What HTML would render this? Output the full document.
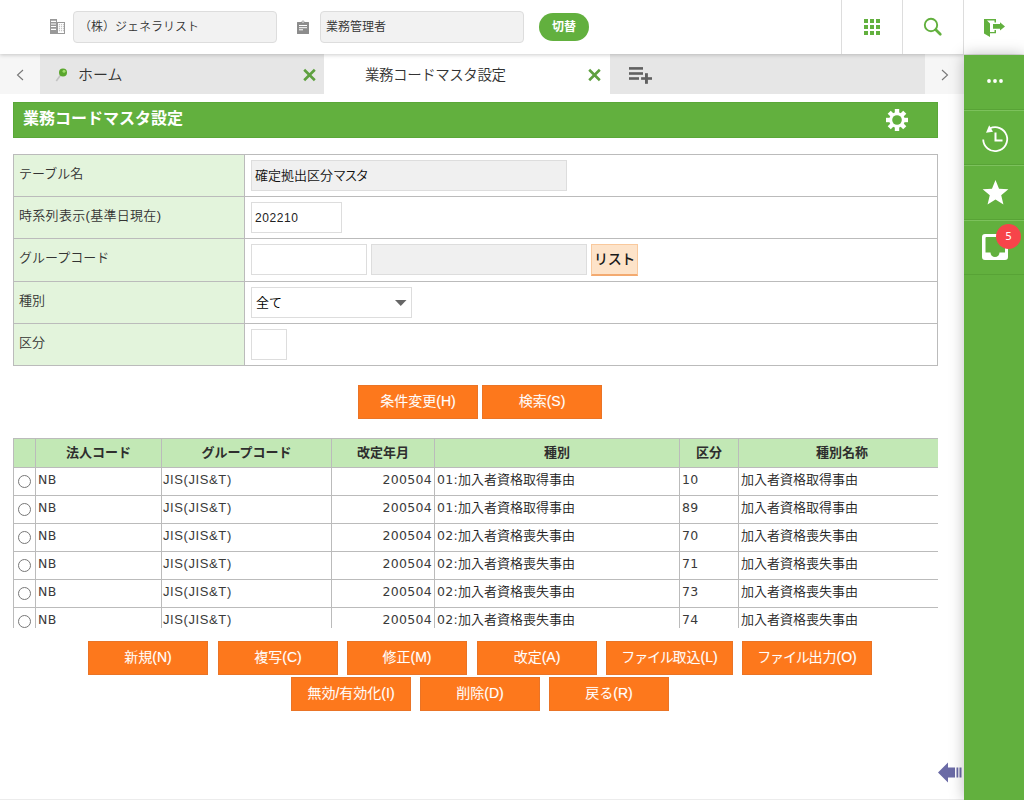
<!DOCTYPE html>
<html lang="ja">
<head>
<meta charset="utf-8">
<title>業務コードマスタ設定</title>
<style>
*{box-sizing:border-box;margin:0;padding:0}
html,body{width:1024px;height:800px;overflow:hidden;background:#fff}
body{font-family:"Liberation Sans","Noto Sans CJK JP",sans-serif;font-size:13px;font-weight:350;color:#333;position:relative}
.abs{position:absolute}
/* header */
#hdr{position:absolute;left:0;top:0;width:1024px;height:54px;background:#fff;z-index:3;box-shadow:0 1px 4px rgba(0,0,0,.2)}
.hin{position:absolute;top:11px;height:32px;background:#f2f2f2;border:1px solid #ddd;border-radius:4px;font-size:12px;line-height:31px;padding-left:5px;color:#333;white-space:nowrap;overflow:hidden}
.hdiv{position:absolute;top:0;width:1px;height:54px;background:#ddd}
#sw{position:absolute;left:539px;top:13px;width:50px;height:28px;border-radius:14px;background:#62b03e;color:#fff;font-weight:bold;font-size:12px;line-height:29px;text-align:center}
/* tabs */
#tabs{position:absolute;left:0;top:54px;width:964px;height:40px;background:#f6f6f6}
.tab{position:absolute;top:0;height:40px;font-size:14px;line-height:41px;color:#333;white-space:nowrap}
/* sidebar */
#side{position:absolute;left:964px;top:55px;width:60px;height:745px;background:#62b03e;z-index:4;box-shadow:0 0 14px rgba(0,0,0,.26)}
.sdiv{position:absolute;left:0;width:60px;height:2px;border-top:1px solid #58a336;border-bottom:1px solid #7cc15c}
/* main */
#ttl{position:absolute;left:13px;top:102px;width:925px;height:36px;background:#62b03e;border:1px solid #5aa738;color:#fff;font-weight:bold;font-size:16px;line-height:31px;padding-left:9px}
#form{position:absolute;left:13px;top:154px;width:925px;height:212px;border:1px solid #bbb;background:#fff}
.fr{position:absolute;left:0;width:923px;height:42px;border-bottom:1px solid #bbb}
.fl{position:absolute;left:0;top:0;width:231px;height:100%;background:#e3f4dc;border-right:1px solid #bbb;font-size:13px;line-height:37px;padding-left:5px;color:#333}
.in{position:absolute;height:31px;border:1px solid #ddd;background:#fff;font-size:13px;line-height:29px;padding-left:3px;color:#111;white-space:nowrap}
.ro{background:#f0f0f0}
.ob{position:absolute;height:34px;background:#fd781c;border:1px solid #ea7426;color:#fff;font-size:14px;line-height:31px;text-align:center;white-space:nowrap;text-shadow:0 0 1px rgba(255,255,255,.4)}
/* grid */
#grid{position:absolute;left:13px;top:438px;width:925px;height:190px;overflow:hidden}
#grid table{border-collapse:collapse;table-layout:fixed;width:1000px}
#grid th{height:29px;background:#c2e8b5;border:1px solid #bbb;font-size:13px;font-weight:700;color:#2e2e2e;text-align:center;vertical-align:top;line-height:27px;padding:0}
#grid td{height:28px;border:1px solid #bbb;font-size:13px;color:#222;padding:0 2px;vertical-align:top;line-height:24px;white-space:nowrap}
#grid td.r{text-align:right}
.l{font-family:"DejaVu Sans","Liberation Sans",sans-serif;font-size:12.5px;font-weight:400;color:#3a3a3a;letter-spacing:.3px}
.j{font-family:"Liberation Sans",sans-serif;font-size:13px;letter-spacing:.6px;margin-left:-1px}
.rd{display:block;width:13px;height:13px;border:1px solid #777;border-radius:50%;margin:7px 0 0 2px;background:#fff}
</style>
</head>
<body>

<div id="hdr">
  <svg class="abs" style="left:50px;top:19px" width="16" height="15" viewBox="0 0 16 15"><rect x="0" y="0" width="7" height="15" fill="#999"/><path d="M1 2.300h5M1 5h5M1 7.500h5M1 10.300h5" stroke="#fff" stroke-width="1.200"/><rect x="7.500" y="3.500" width="7" height="11" fill="#fff" stroke="#999" stroke-width="1"/><g fill="#999"><rect x="8.900" y="5.300" width=".9" height=".9"/><rect x="10.900" y="5.300" width=".9" height=".9"/><rect x="12.900" y="5.300" width=".9" height=".9"/><rect x="8.900" y="7.300" width=".9" height=".9"/><rect x="10.900" y="7.300" width=".9" height=".9"/><rect x="12.900" y="7.300" width=".9" height=".9"/><rect x="8.900" y="9.300" width=".9" height=".9"/><rect x="10.900" y="9.300" width=".9" height=".9"/><rect x="12.900" y="9.300" width=".9" height=".9"/><rect x="8.900" y="11.300" width=".9" height=".9"/><rect x="10.900" y="11.300" width=".9" height=".9"/><rect x="12.900" y="11.300" width=".9" height=".9"/></g></svg>
  <div class="hin" style="left:73px;width:204px">（株）ジェネラリスト</div>
  <svg class="abs" style="left:297px;top:20px" width="12" height="14" viewBox="0 0 12 14"><path d="M0.500 2h4a1.500 1.500 0 0 1 3 0h4a.5.5 0 0 1 .5.500v11a.5.5 0 0 1-.5.500h-11a.5.5 0 0 1-.5-.500v-11a.5.5 0 0 1 .5-.500z" fill="#8c8c8c"/><circle cx="6" cy="2" r=".8" fill="#fff"/><path d="M2 5.500h8M2 7.700h8M2 9.800h4" stroke="#fff" stroke-width="1"/></svg>
  <div class="hin" style="left:320px;width:204px;padding-left:5px">業務管理者</div>
  <div id="sw">切替</div>
  <div class="hdiv" style="left:841px"></div>
  <div class="hdiv" style="left:902px"></div>
  <div class="hdiv" style="left:963px"></div>
  <svg class="abs" style="left:864px;top:19px" width="16" height="16" viewBox="0 0 16 16" fill="#62b03e"><rect x="0" y="0" width="4" height="4"/><rect x="6" y="0" width="4" height="4"/><rect x="12" y="0" width="4" height="4"/><rect x="0" y="6" width="4" height="4"/><rect x="6" y="6" width="4" height="4"/><rect x="12" y="6" width="4" height="4"/><rect x="0" y="12" width="4" height="4"/><rect x="6" y="12" width="4" height="4"/><rect x="12" y="12" width="4" height="4"/></svg>
  <svg class="abs" style="left:923px;top:17px" width="20" height="20" viewBox="0 0 20 20"><circle cx="8" cy="8" r="6.200" fill="none" stroke="#62b03e" stroke-width="1.900"/><path d="M12.800 12.800L17.300 17.300" stroke="#62b03e" stroke-width="2.700" stroke-linecap="round"/></svg>
  <svg class="abs" style="left:983px;top:17px" width="24" height="21" viewBox="0 0 24 21" fill="#62b03e"><path d="M1 2H13V5.500H11.500V3.500H4L7 6.500V15H11.500V13H13V16.300H7V20L1 16.500z"/><path d="M10 7H17V5.200L22 9.400L17 13.600V11.800H10z"/></svg>
</div>

<div id="tabs">
  <div class="tab" style="left:40px;width:284px;background:#e6e6e6"></div>
  <div class="tab" style="left:324px;width:286px;background:#fff"></div>
  <div class="tab" style="left:610px;width:315px;background:#e6e6e6"></div>
  <svg class="abs" style="left:16px;top:15px" width="8" height="12" viewBox="0 0 8 12"><path d="M7 1L1.500 6L7 11" fill="none" stroke="#777" stroke-width="1.100"/></svg>
  <svg class="abs" style="left:941px;top:15px" width="8" height="12" viewBox="0 0 8 12"><path d="M1 1L6.500 6L1 11" fill="none" stroke="#777" stroke-width="1.100"/></svg>
  <svg class="abs" style="left:55px;top:13px" width="14" height="15" viewBox="0 0 14 15"><path d="M1.300 14L6 7.500" stroke="#c2c2c2" stroke-width="1.600"/><circle cx="8" cy="5.500" r="4" fill="#5aa62d"/><circle cx="9" cy="4.300" r="1.500" fill="#9fdc6a"/></svg>
  <div class="tab" style="left:78px;font-size:15px;line-height:42px">ホーム</div>
  <svg class="abs" style="left:303px;top:14px" width="13" height="14" viewBox="0 0 13 14"><path d="M1.200 1.800L11.800 12.200M11.800 1.800L1.200 12.200" stroke="#5ea03f" stroke-width="2.600"/></svg>
  <div class="tab" style="left:365px;font-size:14.500px;letter-spacing:-.45px;line-height:42px">業務コードマスタ設定</div>
  <svg class="abs" style="left:588px;top:14px" width="13" height="14" viewBox="0 0 13 14"><path d="M1.200 1.800L11.800 12.200M11.800 1.800L1.200 12.200" stroke="#5ea03f" stroke-width="2.600"/></svg>
  <svg class="abs" style="left:629px;top:13px" width="24" height="18" viewBox="0 0 24 18" fill="#606060"><rect x="0" y=".1" width="14" height="2.600"/><rect x="0" y="5.200" width="14" height="2.600"/><rect x="0" y="10.200" width="10" height="2.600"/><rect x="12.100" y="10.200" width="10.900" height="2.600"/><rect x="16" y="6.200" width="2.900" height="10.600"/></svg>
</div>

<div id="side">
  <div class="sdiv" style="top:54px"></div>
  <div class="sdiv" style="top:109px"></div>
  <div class="sdiv" style="top:164px"></div>
  <div class="sdiv" style="top:219px;border-bottom-color:transparent"></div>
  <svg class="abs" style="left:23px;top:23px" width="16" height="6" viewBox="0 0 16 6" fill="#fff"><circle cx="2" cy="3" r="1.900"/><circle cx="8" cy="3" r="1.900"/><circle cx="14" cy="3" r="1.900"/></svg>
  <svg class="abs" style="left:15px;top:68px" width="32" height="32" viewBox="0 0 32 32"><path d="M4.200 16.500a12 12 0 1 0 6.500-11" fill="none" stroke="#fff" stroke-width="1.800"/><path d="M7 9.800L10.200 2.300L14 8.800z" fill="#fff"/><path d="M16.500 9.500v8h7" fill="none" stroke="#fff" stroke-width="2"/></svg>
  <svg class="abs" style="left:18px;top:124px" width="28" height="28" viewBox="0 0 28 28"><path d="M13.50 1.00L17.03 9.65L26.34 10.33L19.21 16.35L21.44 25.42L13.50 20.50L5.56 25.42L7.79 16.35L0.66 10.33L9.97 9.65z" fill="#fff"/></svg>
  <svg class="abs" style="left:18px;top:179px" width="26" height="26" viewBox="0 0 26 26"><path d="M3 0h20a3 3 0 0 1 3 3v20a3 3 0 0 1-3 3H3a3 3 0 0 1-3-3V3a3 3 0 0 1 3-3zM3.500 4v14.500H8.500a4.500 4.500 0 0 0 9 0H23V4a1 1 0 0 0-1-1H4.500a1 1 0 0 0-1 1z" fill="#fff" fill-rule="evenodd"/></svg>
  <div class="abs" style="left:32px;top:169px;width:25px;height:25px;border-radius:50%;background:#f7444a;color:#fff;font-family:'DejaVu Sans',sans-serif;font-weight:400;font-size:10.500px;line-height:25px;text-align:center">5</div>
</div>

<div id="ttl">業務コードマスタ設定
  <svg class="abs" style="left:872px;top:6px" width="22" height="22" viewBox="0 0 22 22"><g fill="#fff"><circle cx="11" cy="11" r="7.800"/><rect x="8.800" y="0" width="4.400" height="22"/><rect x="8.800" y="0" width="4.400" height="22" transform="rotate(45 11 11)"/><rect x="8.800" y="0" width="4.400" height="22" transform="rotate(90 11 11)"/><rect x="8.800" y="0" width="4.400" height="22" transform="rotate(135 11 11)"/></g><circle cx="11" cy="11" r="4.800" fill="#62b03e"/></svg>
</div>

<div id="form">
  <div class="fr" style="top:0"><div class="fl">テーブル名</div><div class="in ro" style="left:237px;top:5px;width:316px">確定拠出区分<span style="letter-spacing:-1.600px">マスタ</span></div></div>
  <div class="fr" style="top:42px"><div class="fl" style="letter-spacing:.3px">時系列表示(基準日現在)</div><div class="in" style="left:237px;top:5px;width:91px;font-size:12px;padding-left:3px;line-height:31px;color:#222;letter-spacing:.6px">202210</div></div>
  <div class="fr" style="top:84px;height:43px"><div class="fl">グループコード</div><div class="in" style="left:237px;top:5px;width:116px"></div><div class="in ro" style="left:357px;top:5px;width:216px"></div>
    <div class="abs" style="left:577px;top:5px;width:47px;height:32px;background:#fde3c9;border:1px solid #f9c99d;border-bottom:2px solid #f3aa70;font-weight:500;font-size:14px;line-height:28px;text-align:center;color:#1a1a1a;letter-spacing:-.3px">リスト</div></div>
  <div class="fr" style="top:127px"><div class="fl">種別</div><div class="in" style="left:237px;top:5px;width:161px;font-size:13px;padding-left:4px;color:#000">全て<svg class="abs" style="left:143px;top:12px" width="12" height="6" viewBox="0 0 12 6"><path d="M0 0h11.500L5.750 6z" fill="#666"/></svg></div></div>
  <div class="fr" style="top:169px;border-bottom:none;height:41px"><div class="fl">区分</div><div class="in" style="left:237px;top:5px;width:36px"></div></div>
</div>

<div class="ob" style="left:358px;top:385px;width:120px">条件変更(H)</div>
<div class="ob" style="left:482px;top:385px;width:120px">検索(S)</div>

<div id="grid">
<table>
<colgroup><col style="width:22px"><col style="width:126px"><col style="width:170px"><col style="width:103px"><col style="width:245px"><col style="width:59px"><col style="width:275px"></colgroup>
<tr><th></th><th>法人コード</th><th>グループコード</th><th>改定年月</th><th>種別</th><th>区分</th><th style="padding-right:68px">種別名称</th></tr>
<tr><td><span class="rd"></span></td><td><span class="l">NB</span></td><td><span class="l j">JIS(JIS&amp;T)</span></td><td class="r"><span class="l">200504</span></td><td><span class="l">01:</span>加入者資格取得事由</td><td><span class="l">10</span></td><td>加入者資格取得事由</td></tr>
<tr><td><span class="rd"></span></td><td><span class="l">NB</span></td><td><span class="l j">JIS(JIS&amp;T)</span></td><td class="r"><span class="l">200504</span></td><td><span class="l">01:</span>加入者資格取得事由</td><td><span class="l">89</span></td><td>加入者資格取得事由</td></tr>
<tr><td><span class="rd"></span></td><td><span class="l">NB</span></td><td><span class="l j">JIS(JIS&amp;T)</span></td><td class="r"><span class="l">200504</span></td><td><span class="l">02:</span>加入者資格喪失事由</td><td><span class="l">70</span></td><td>加入者資格喪失事由</td></tr>
<tr><td><span class="rd"></span></td><td><span class="l">NB</span></td><td><span class="l j">JIS(JIS&amp;T)</span></td><td class="r"><span class="l">200504</span></td><td><span class="l">02:</span>加入者資格喪失事由</td><td><span class="l">71</span></td><td>加入者資格喪失事由</td></tr>
<tr><td><span class="rd"></span></td><td><span class="l">NB</span></td><td><span class="l j">JIS(JIS&amp;T)</span></td><td class="r"><span class="l">200504</span></td><td><span class="l">02:</span>加入者資格喪失事由</td><td><span class="l">73</span></td><td>加入者資格喪失事由</td></tr>
<tr><td><span class="rd"></span></td><td><span class="l">NB</span></td><td><span class="l j">JIS(JIS&amp;T)</span></td><td class="r"><span class="l">200504</span></td><td><span class="l">02:</span>加入者資格喪失事由</td><td><span class="l">74</span></td><td>加入者資格喪失事由</td></tr>
</table>
</div>

<div class="ob" style="left:88px;top:641px;width:120px">新規(N)</div>
<div class="ob" style="left:218px;top:641px;width:120px">複写(C)</div>
<div class="ob" style="left:347px;top:641px;width:120px">修正(M)</div>
<div class="ob" style="left:477px;top:641px;width:120px">改定(A)</div>
<div class="ob" style="left:606px;top:641px;width:127px"><span style="letter-spacing:-1.200px">ファイル</span>取込(L)</div>
<div class="ob" style="left:742px;top:641px;width:130px"><span style="letter-spacing:-1.200px">ファイル</span>出力(O)</div>
<div class="ob" style="left:291px;top:677px;width:120px">無効/有効化(I)</div>
<div class="ob" style="left:420px;top:677px;width:120px">削除(D)</div>
<div class="ob" style="left:549px;top:677px;width:120px">戻る(R)</div>

<svg class="abs" style="left:937px;top:762px" width="26" height="21" viewBox="0 0 26 21"><path d="M1 10.500L11 0.500V5.500H18V15.500H11V20.500z" fill="#6b6ba6"/><rect x="19.500" y="5.500" width="1.800" height="10" fill="#6b6ba6"/><rect x="22.500" y="5.500" width="2" height="10" fill="#6b6ba6"/></svg>
<div class="abs" style="left:0;top:799px;width:964px;height:1px;background:#ececec"></div>

</body>
</html>
